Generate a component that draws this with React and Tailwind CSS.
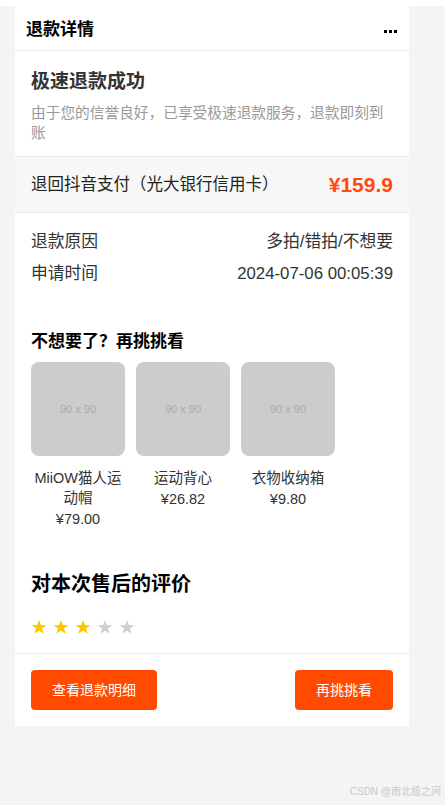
const products = [
  { name: 'MiiOW猫人运动帽', price: '¥79.00' },
  { name: '运动背心', price: '¥26.82' },
  { name: '衣物收纳箱', price: '¥9.80' },
];

function Star({ on }) {
  return (
    <svg viewBox="0 0 24 24" className="w-[16px] h-[16px]">
      <polygon
        points="12,1.5 14.9,9 23,9.3 16.6,14.3 18.9,22.2 12,17.6 5.1,22.2 7.4,14.3 1,9.3 9.1,9"
        fill={on ? '#ffc600' : '#d0d0d0'}
      />
    </svg>
  );
}

export default function App() {
  return (
    <div className="relative min-h-[805px] bg-[#f4f4f4] font-['Liberation_Sans','Noto_Sans_CJK_SC',sans-serif]">
      <div className="h-[6px] bg-white" />
      <div className="ml-[15px] w-[394px] bg-white">
        {/* Header */}
        <header className="h-[45px] flex items-center justify-between pl-[11px] pr-[12px] border-b border-[#ececec]">
          <h1 className="text-[17px] font-bold text-black leading-none mt-[2px]">退款详情</h1>
          <div className="flex gap-[2px] mt-[6px]">
            <span className="w-[3px] h-[3px] bg-black" />
            <span className="w-[3px] h-[3px] bg-black" />
            <span className="w-[3px] h-[3px] bg-black" />
          </div>
        </header>

        {/* Status */}
        <section className="px-[16px] pt-[18px] pb-[13px]">
          <h2 className="text-[19px] leading-[26px] font-bold text-[#333]">极速退款成功</h2>
          <p className="mt-[8px] text-[14.7px] leading-[20px] text-[#999]">
            由于您的信誉良好，已享受极速退款服务，退款即刻到账
          </p>
        </section>

        {/* Refund amount */}
        <div className="h-[57px] px-[16px] flex items-center justify-between bg-[#f7f7f7] border-y border-[#ececec]">
          <span className="text-[16.5px] text-[#222]">退回抖音支付（光大银行信用卡）</span>
          <span className="text-[21px] font-bold text-[#ff4a12]">¥159.9</span>
        </div>

        {/* Details */}
        <div className="px-[16px] pt-[13px] text-[16.8px] leading-[32px] text-[#333]">
          <div className="flex justify-between">
            <span>退款原因</span>
            <span>多拍/错拍/不想要</span>
          </div>
          <div className="flex justify-between">
            <span>申请时间</span>
            <span>2024-07-06 00:05:39</span>
          </div>
        </div>

        {/* Recommendations */}
        <section className="px-[16px] mt-[40px]">
          <h3 className="text-[17px] leading-[24px] font-bold text-black">不想要了？再挑挑看</h3>
          <div className="mt-[8px] flex gap-[11px]">
            {products.map((p) => (
              <div key={p.name} className="w-[94px] flex flex-col items-center text-center">
                <div className="w-[94px] h-[94px] rounded-[8px] bg-[#cccccc] flex items-center justify-center text-[11px] text-[#aaa]">
                  90 x 90
                </div>
                <p className="mt-[12px] text-[14.5px] leading-[20px] text-[#333]">{p.name}</p>
                <p className="text-[14.5px] leading-[22px] text-[#333]">{p.price}</p>
              </div>
            ))}
          </div>
        </section>

        {/* Rating */}
        <section className="px-[16px] mt-[40px] pb-[18px] border-b border-[#ececec]">
          <h3 className="text-[20px] leading-[28px] font-bold text-black">对本次售后的评价</h3>
          <div className="mt-[21px] flex gap-[6px]">
            <Star on />
            <Star on />
            <Star on />
            <Star />
            <Star />
          </div>
        </section>

        {/* Actions */}
        <div className="px-[16px] pt-[16px] pb-[16px] flex justify-between">
          <button className="h-[40px] px-[21px] rounded-[4px] bg-[#ff4a00] text-white text-[14px]">查看退款明细</button>
          <button className="h-[40px] px-[21px] rounded-[4px] bg-[#ff4a00] text-white text-[14px]">再挑挑看</button>
        </div>
      </div>

      <span className="absolute right-[4px] bottom-[6px] text-[10px] text-[#c8c8c8]">CSDN @南北极之间</span>
    </div>
  );
}
